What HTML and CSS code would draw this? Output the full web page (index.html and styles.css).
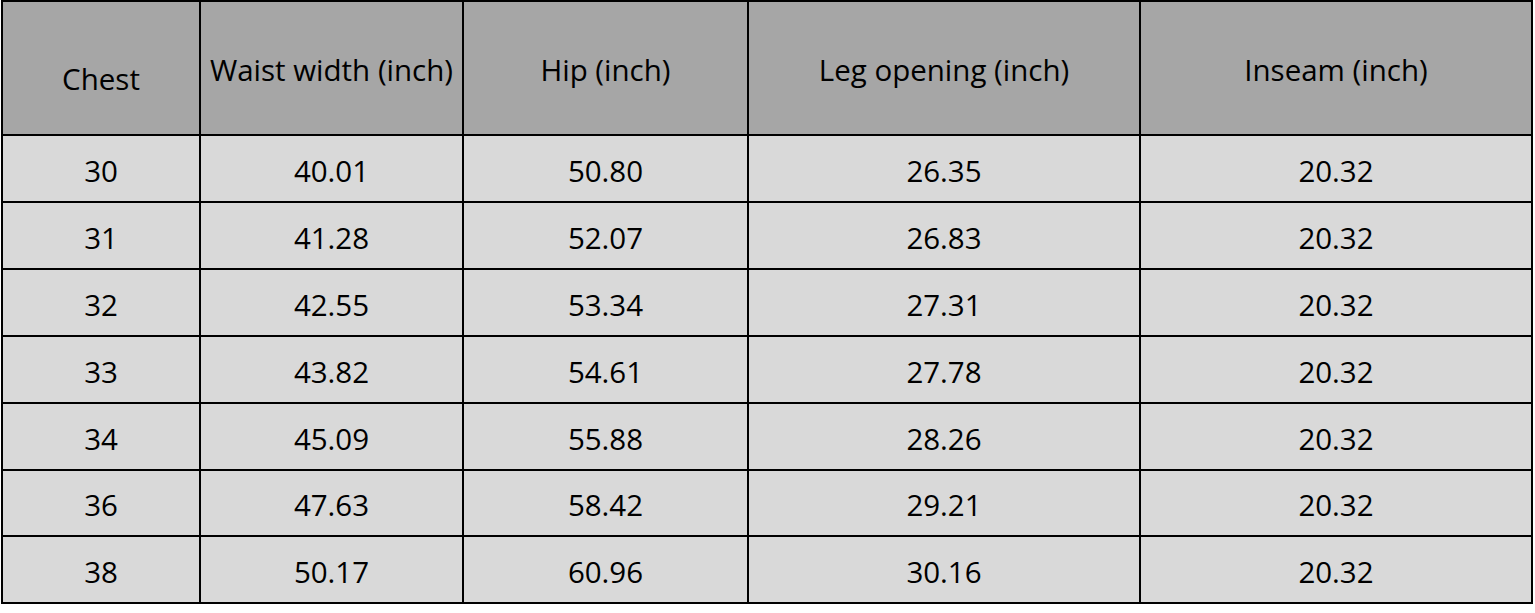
FILE: index.html
```html
<!DOCTYPE html>
<html lang="en">
<head>
<meta charset="utf-8">
<title>Size chart</title>
<link rel="stylesheet" href="styles.css">
</head>
<body>
<table class="size-table">
  <colgroup>
    <col class="c1"><col class="c2"><col class="c3"><col class="c4"><col class="c5">
  </colgroup>
  <thead>
    <tr>
      <th class="chest">Chest</th>
      <th>Waist width (inch)</th>
      <th>Hip (inch)</th>
      <th>Leg opening (inch)</th>
      <th>Inseam (inch)</th>
    </tr>
  </thead>
  <tbody>
    <tr><td>30</td><td>40.01</td><td>50.80</td><td>26.35</td><td>20.32</td></tr>
    <tr><td>31</td><td>41.28</td><td>52.07</td><td>26.83</td><td>20.32</td></tr>
    <tr><td>32</td><td>42.55</td><td>53.34</td><td>27.31</td><td>20.32</td></tr>
    <tr><td>33</td><td>43.82</td><td>54.61</td><td>27.78</td><td>20.32</td></tr>
    <tr><td>34</td><td>45.09</td><td>55.88</td><td>28.26</td><td>20.32</td></tr>
    <tr class="short"><td>36</td><td>47.63</td><td>58.42</td><td>29.21</td><td>20.32</td></tr>
    <tr><td>38</td><td>50.17</td><td>60.96</td><td>30.16</td><td>20.32</td></tr>
  </tbody>
</table>
</body>
</html>
```
FILE: styles.css
```css
html, body {
  margin: 0;
  padding: 0;
  background: #ffffff;
}

.size-table {
  margin-left: 1px;
  border-collapse: separate;
  border-spacing: 0;
  table-layout: fixed;
  width: 1532px;
  border-top: 2px solid #000;
  border-left: 2px solid #000;
  font-family: "Open Sans", "Liberation Sans", sans-serif;
  font-size: 29.5px;
  color: #000;
}

.c1 { width: 198px; }
.c2 { width: 263px; }
.c3 { width: 285px; }
.c4 { width: 392px; }
.c5 { width: 392px; }

.size-table th,
.size-table td {
  border-right: 2px solid #000;
  border-bottom: 2px solid #000;
  padding: 0;
  text-align: center;
  vertical-align: middle;
  font-weight: normal;
  box-sizing: border-box;
}

.size-table th {
  background: #a6a6a6;
  height: 134px;
  padding-top: 2px;
}

.size-table th.chest {
  padding-top: 20px;
}

.size-table td {
  background: #d9d9d9;
  height: 67px;
  padding-top: 3px;
}

.size-table tr.short td {
  height: 66px;
}
```
